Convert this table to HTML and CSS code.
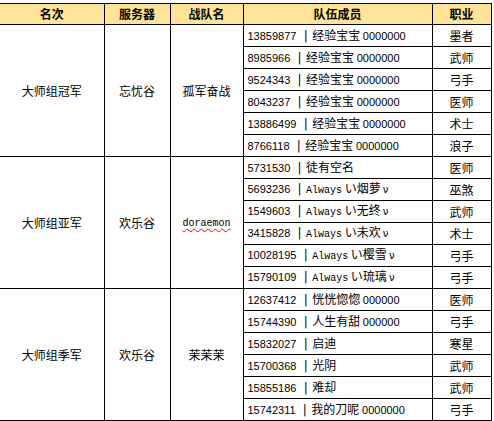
FILE: index.html
```html
<!DOCTYPE html>
<html lang="zh-CN">
<head>
<meta charset="utf-8">
<title>大师组战队名单</title>
<link rel="stylesheet" href="styles.css">
</head>
<body>
<table class="roster">
  <colgroup>
    <col class="c-rank">
    <col class="c-server">
    <col class="c-team">
    <col class="c-members">
    <col class="c-job">
  </colgroup>
  <thead>
    <tr>
      <th class="first">名次</th>
      <th>服务器</th>
      <th>战队名</th>
      <th>队伍成员</th>
      <th>职业</th>
    </tr>
  </thead>
  <tbody>
    <tr>
      <td class="first group" rowspan="6">大师组冠军</td>
      <td class="group" rowspan="6">忘忧谷</td>
      <td class="group" rowspan="6">孤军奋战</td>
      <td class="member"><span class="num">13859877</span> <span class="sep">|</span>经验宝宝 <span class="num">0000000</span></td>
      <td class="job">墨者</td>
    </tr>
    <tr><td class="member"><span class="num">8985966</span> <span class="sep">|</span>经验宝宝 <span class="num">0000000</span></td><td class="job">武师</td></tr>
    <tr><td class="member"><span class="num">9524343</span> <span class="sep">|</span>经验宝宝 <span class="num">0000000</span></td><td class="job">弓手</td></tr>
    <tr><td class="member"><span class="num">8043237</span> <span class="sep">|</span>经验宝宝 <span class="num">0000000</span></td><td class="job">医师</td></tr>
    <tr><td class="member"><span class="num">13886499</span> <span class="sep">|</span>经验宝宝 <span class="num">0000000</span></td><td class="job">术士</td></tr>
    <tr><td class="member"><span class="num">8766118</span> <span class="sep">|</span>经验宝宝 <span class="num">0000000</span></td><td class="job">浪子</td></tr>

    <tr>
      <td class="first group" rowspan="6">大师组亚军</td>
      <td class="group" rowspan="6">欢乐谷</td>
      <td class="group" rowspan="6"><span class="mono spell">doraemon</span></td>
      <td class="member"><span class="num">5731530</span> <span class="sep">|</span>徒有空名</td>
      <td class="job">医师</td>
    </tr>
    <tr><td class="member"><span class="num">5693236</span> <span class="sep">|</span><span class="mono">Always</span> い烟萝<span class="tick">ν</span></td><td class="job">巫煞</td></tr>
    <tr><td class="member"><span class="num">1549603</span> <span class="sep">|</span><span class="mono">Always</span> い无终<span class="tick">ν</span></td><td class="job">武师</td></tr>
    <tr><td class="member"><span class="num">3415828</span> <span class="sep">|</span><span class="mono">Always</span> い未欢<span class="tick">ν</span></td><td class="job">术士</td></tr>
    <tr><td class="member"><span class="num">10028195</span> <span class="sep">|</span><span class="mono">Always</span> い樱雪<span class="tick">ν</span></td><td class="job">弓手</td></tr>
    <tr><td class="member"><span class="num">15790109</span> <span class="sep">|</span><span class="mono">Always</span> い琉璃<span class="tick">ν</span></td><td class="job">弓手</td></tr>

    <tr>
      <td class="first group" rowspan="6">大师组季军</td>
      <td class="group" rowspan="6">欢乐谷</td>
      <td class="group" rowspan="6">茉茉茉</td>
      <td class="member"><span class="num">12637412</span> <span class="sep">|</span>恍恍惚惚 <span class="num">000000</span></td>
      <td class="job">医师</td>
    </tr>
    <tr><td class="member"><span class="num">15744390</span> <span class="sep">|</span>人生有甜 <span class="num">000000</span></td><td class="job">弓手</td></tr>
    <tr><td class="member"><span class="num">15832027</span> <span class="sep">|</span>启迪</td><td class="job">寒星</td></tr>
    <tr><td class="member"><span class="num">15700368</span> <span class="sep">|</span>光阴</td><td class="job">武师</td></tr>
    <tr><td class="member"><span class="num">15855186</span> <span class="sep">|</span>难却</td><td class="job">武师</td></tr>
    <tr><td class="member"><span class="num">15742311</span> <span class="sep">|</span>我的刀呢 <span class="num">0000000</span></td><td class="job">弓手</td></tr>
  </tbody>
</table>
</body>
</html>
```

FILE: styles.css
```css
html, body {
  background: #ffffff;
}

body {
  margin: 3px 0 0 0;
  font-family: "Noto Sans CJK SC", "Liberation Sans", sans-serif;
  font-size: 12px;
  color: #000000;
}

.roster {
  border-collapse: collapse;
  table-layout: fixed;
  width: 491px;
}

.c-rank { width: 104px; }
.c-server { width: 66px; }
.c-team { width: 73px; }
.c-members { width: 189px; }
.c-job { width: 59px; }

.roster th,
.roster td {
  border: 1px solid #000000;
  padding: 0;
  line-height: 14px;
  white-space: nowrap;
  overflow: hidden;
}

.roster .first {
  border-left: none;
}

.roster th {
  height: 20px;
  background: #ffe497;
  font-size: 12px;
  font-weight: 700;
  text-align: center;
}

.roster td {
  height: 21px;
}

.group {
  text-align: center;
  vertical-align: middle;
}

.member {
  text-align: left;
  padding-left: 4px !important;
}

.job {
  text-align: center;
}

.num {
  font-family: "Liberation Sans", sans-serif;
  font-size: 11px;
}

.sep {
  display: inline-block;
  width: 13px;
  text-align: center;
  font-family: "DejaVu Sans", sans-serif;
  font-size: 12px;
  color: #000000;
}

.mono {
  font-family: "Liberation Mono", monospace;
  font-size: 10px;
}

.spell {
  text-decoration: underline wavy #ff0000;
  text-decoration-thickness: 1px;
  text-underline-offset: 2px;
}

.tick {
  font-family: "DejaVu Sans", sans-serif;
  font-size: 10px;
  margin-left: 2px;
}
```
